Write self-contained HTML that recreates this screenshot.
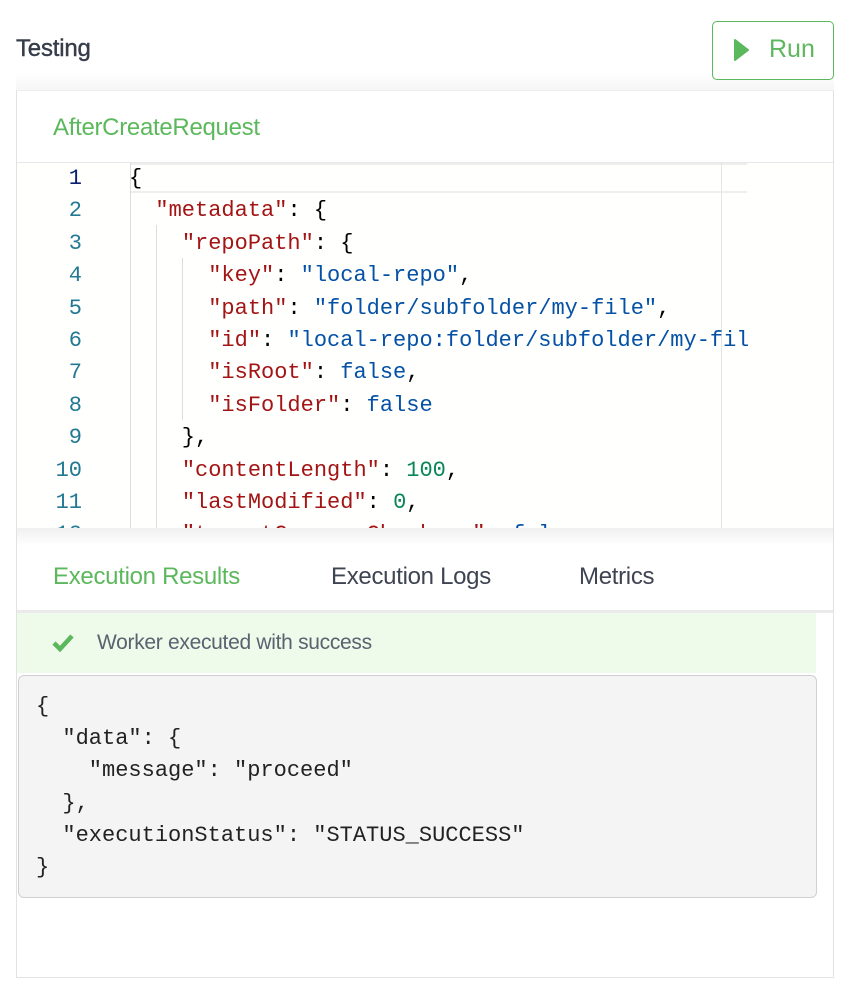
<!DOCTYPE html>
<html><head><meta charset="utf-8"><style>
*{margin:0;padding:0;box-sizing:border-box}
body{width:850px;height:996px;background:#fff;font-family:"Liberation Sans",sans-serif;position:relative;overflow:hidden}
.abs{position:absolute}
.title{left:16px;top:35px;font-size:24px;color:#363c4a;letter-spacing:-0.2px;-webkit-text-stroke:0.4px #363c4a}
.run{left:712px;top:21px;width:122px;height:59px;border:1px solid #5cb85c;border-radius:5px;color:#5cb85c;font-size:25px;background:#fff;z-index:2}
.panel{left:16px;top:90px;width:818px;height:888px;border:1px solid #e2e2e2;border-top-color:#eee}
.hdr{left:53px;top:114px;font-size:24px;color:#5cb85c;letter-spacing:-0.3px}
.mono{font-family:"Liberation Mono","DejaVu Sans Mono",monospace;font-size:22px;white-space:pre}
.ln{position:absolute;left:30px;width:52px;text-align:right;color:#237893}
.cl{position:absolute;left:129px;color:#000}
.k{color:#a31515}.s{color:#0451a5}.n{color:#098658}
.tab{top:563px;font-size:24px;color:#3e4452;letter-spacing:-0.3px}
</style></head><body>
<div class="abs" style="left:16px;top:72px;width:818px;height:18px;background:linear-gradient(#fff,#f6f6f6)"></div>
<div class="abs title">Testing</div>
<div class="abs run"><svg class="abs" style="left:20px;top:17px" width="16" height="22" viewBox="0 0 16 22"><path d="M2 1 L15 11 L2 21 Z" fill="#5cb85c" stroke="#5cb85c" stroke-width="2" stroke-linejoin="round"/></svg><span class="abs" style="left:56px;top:13px">Run</span></div>
<div class="abs panel"></div>
<div class="abs hdr">AfterCreateRequest</div>
<div class="abs" style="left:17px;top:162px;width:816px;height:1px;background:#e8e8e8"></div>
<div class="abs" style="left:17px;top:163px;width:816px;height:365px;overflow:hidden;background:#fffffe">
  <div class="abs" style="left:113px;top:0;width:617px;height:30px;border:2px solid #eee;border-left:none;border-right:none"></div>
  <div class="abs" style="left:113px;top:0;width:1px;height:365px;background:#ddd"></div>
  <div class="abs" style="left:139px;top:62px;width:1px;height:303px;background:#ddd"></div>
  <div class="abs" style="left:165px;top:95px;width:1px;height:162px;background:#ddd"></div>
  <div class="abs" style="left:704px;top:0;width:1px;height:365px;background:#e5e5e5"></div>
  <div class="abs mono" style="left:-17px;top:0;width:748px;height:365px;overflow:hidden">
<div class="ln" style="top:0;line-height:32.4px;color:#0b216f">1</div><div class="cl" style="top:0;line-height:32.4px">{</div>
<div class="ln" style="top:32.4px;line-height:32.4px">2</div><div class="cl" style="top:32.4px;line-height:32.4px">  <span class="k">"metadata"</span>: {</div>
<div class="ln" style="top:64.8px;line-height:32.4px">3</div><div class="cl" style="top:64.8px;line-height:32.4px">    <span class="k">"repoPath"</span>: {</div>
<div class="ln" style="top:97.2px;line-height:32.4px">4</div><div class="cl" style="top:97.2px;line-height:32.4px">      <span class="k">"key"</span>: <span class="s">"local-repo"</span>,</div>
<div class="ln" style="top:129.6px;line-height:32.4px">5</div><div class="cl" style="top:129.6px;line-height:32.4px">      <span class="k">"path"</span>: <span class="s">"folder/subfolder/my-file"</span>,</div>
<div class="ln" style="top:162px;line-height:32.4px">6</div><div class="cl" style="top:162px;line-height:32.4px">      <span class="k">"id"</span>: <span class="s">"local-repo:folder/subfolder/my-file"</span>,</div>
<div class="ln" style="top:194.4px;line-height:32.4px">7</div><div class="cl" style="top:194.4px;line-height:32.4px">      <span class="k">"isRoot"</span>: <span class="s">false</span>,</div>
<div class="ln" style="top:226.8px;line-height:32.4px">8</div><div class="cl" style="top:226.8px;line-height:32.4px">      <span class="k">"isFolder"</span>: <span class="s">false</span></div>
<div class="ln" style="top:259.2px;line-height:32.4px">9</div><div class="cl" style="top:259.2px;line-height:32.4px">    },</div>
<div class="ln" style="top:291.6px;line-height:32.4px">10</div><div class="cl" style="top:291.6px;line-height:32.4px">    <span class="k">"contentLength"</span>: <span class="n">100</span>,</div>
<div class="ln" style="top:324px;line-height:32.4px">11</div><div class="cl" style="top:324px;line-height:32.4px">    <span class="k">"lastModified"</span>: <span class="n">0</span>,</div>
<div class="ln" style="top:356.4px;line-height:32.4px">12</div><div class="cl" style="top:356.4px;line-height:32.4px">    <span class="k">"targetCompareChecksum"</span>: <span class="s">false</span></div>
  </div>
</div>
<div class="abs" style="left:17px;top:528px;width:816px;height:18px;background:linear-gradient(#f0f0f0,#fff)"></div>
<div class="abs tab" style="left:53px;color:#5cb85c">Execution Results</div>
<div class="abs tab" style="left:331px">Execution Logs</div>
<div class="abs tab" style="left:579px">Metrics</div>
<div class="abs" style="left:17px;top:610px;width:816px;height:3px;background:#ebebeb"></div>
<div class="abs" style="left:17px;top:613px;width:799px;height:60px;background:#eefaea"></div>
<svg class="abs" style="left:51px;top:633px" width="24" height="20" viewBox="0 0 24 20"><path d="M3 10 L9 16 L21 3" fill="none" stroke="#5cb85c" stroke-width="4.5"/></svg>
<div class="abs" style="left:97px;top:631px;font-size:21px;color:#5a6270;letter-spacing:-0.3px">Worker executed with success</div>
<div class="abs mono" style="left:18px;top:675px;width:799px;height:223px;background:#f4f4f4;border:1px solid #d0d0d0;border-radius:6px;color:#222;padding:15px 0 0 17px;line-height:32.2px">{
  "data": {
    "message": "proceed"
  },
  "executionStatus": "STATUS_SUCCESS"
}</div>
</body></html>
